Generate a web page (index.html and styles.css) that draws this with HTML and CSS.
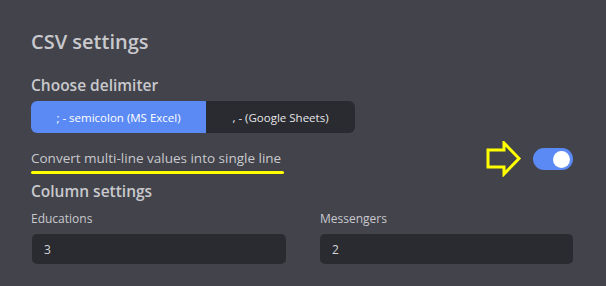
FILE: index.html
```html
<!DOCTYPE html>
<html>
<head>
<meta charset="utf-8">
<link rel="stylesheet" href="styles.css">
</head>
<body>
<div class="panel">
  <h1 class="title">CSV settings</h1>
  <h2 class="subtitle">Choose delimiter</h2>
  <div class="seg">
    <div class="seg-btn active">; - semicolon (MS Excel)</div>
    <div class="seg-btn">, - (Google Sheets)</div>
  </div>
  <div class="toggle-row">
    <div class="toggle-label">Convert multi-line values into single line</div>
    <div class="toggle-side">
      <svg class="arrow" width="36" height="36" viewBox="0 0 36 36">
        <polygon points="2,9 18,9 18,2 33,17.5 18,33 18,26 2,26" fill="none" stroke="#ffff00" stroke-width="3" stroke-linejoin="miter"/>
      </svg>
      <div class="switch"><div class="knob"></div></div>
    </div>
  </div>
  <h2 class="subtitle sub2">Column settings</h2>
  <div class="cols">
    <div class="field">
      <div class="field-label">Educations</div>
      <div class="input">3</div>
    </div>
    <div class="field">
      <div class="field-label">Messengers</div>
      <div class="input">2</div>
    </div>
  </div>
</div>
</body>
</html>
```
FILE: styles.css
```css
html, body {
  margin: 0;
  padding: 0;
  background: #42434b;
  width: 606px;
  height: 286px;
  overflow: hidden;
}
body {
  font-family: "Open Sans", Lato, sans-serif;
  color: #c9c9cd;
}
.panel {
  padding: 29px 33px 0 31px;
}
.title {
  margin: 0;
  font-size: 20px;
  line-height: 26px;
  font-weight: 600;
  color: #c9c9cd;
}
.subtitle {
  margin: 20px 0 0 0;
  font-size: 15.5px;
  line-height: 20px;
  font-weight: 600;
  color: #c9c9cd;
}
.seg {
  margin-top: 6px;
  display: flex;
  width: 324px;
  height: 32px;
  border-radius: 6px;
  overflow: hidden;
  background: #2a2b30;
}
.seg-btn {
  display: flex;
  align-items: center;
  justify-content: center;
  font-size: 11.5px;
  color: #e6e6ea;
  flex: 0 0 149px;
}
.seg-btn.active {
  flex: 0 0 175px;
  background: #5b8af5;
  color: #ffffff;
}
.toggle-row {
  display: flex;
  justify-content: space-between;
  align-items: flex-start;
  margin-top: 9px;
}
.toggle-label {
  font-size: 13.5px;
  line-height: 20px;
  color: #c9c9cd;
  padding-top: 6px;
}
.toggle-label::after {
  content: "";
  display: block;
  height: 3px;
  border-radius: 2px;
  background: #ffff00;
  margin-top: 3px;
  width: 253px;
}
.toggle-side {
  display: flex;
  align-items: center;
  gap: 11px;
  margin-top: -1px;
}
.arrow {
  display: block;
}
.switch {
  width: 40px;
  height: 22px;
  border-radius: 11px;
  background: #5b8af5;
  display: flex;
  align-items: center;
  justify-content: flex-end;
  padding-right: 3px;
  box-sizing: border-box;
}
.knob {
  width: 17px;
  height: 17px;
  border-radius: 50%;
  background: #ffffff;
}
.sub2 {
  margin-top: 4px;
}
.cols {
  display: grid;
  grid-template-columns: 255px 253px;
  column-gap: 34px;
  margin-top: 10px;
}
.field-label {
  font-size: 12px;
  line-height: 16px;
  color: #c9c9cd;
}
.input {
  margin-top: 7px;
  height: 30px;
  border-radius: 5px;
  background: #2a2b30;
  display: flex;
  align-items: center;
  padding-left: 12px;
  font-size: 12px;
  color: #d5d5d9;
}
.field:first-child .input {
  margin-left: 1px;
}
```
